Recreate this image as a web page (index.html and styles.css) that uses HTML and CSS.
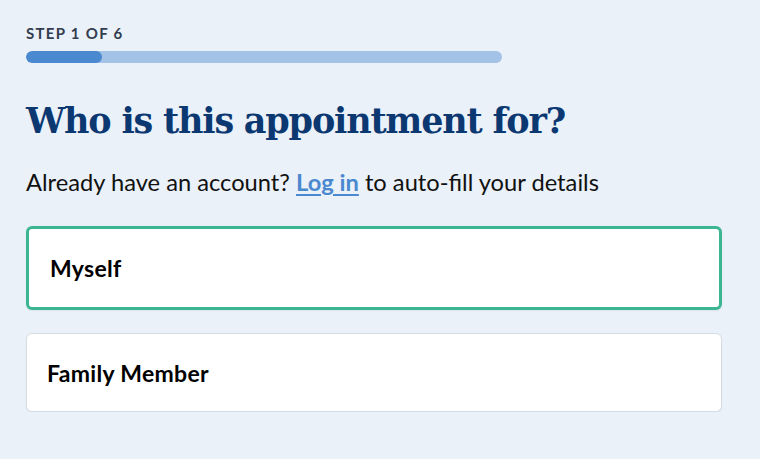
FILE: index.html
```html
<!DOCTYPE html>
<html lang="en">
<head>
<meta charset="utf-8">
<title>Who is this appointment for?</title>
<link rel="stylesheet" href="styles.css">
</head>
<body>
<main class="page">
  <div class="step">STEP 1 OF 6</div>
  <div class="progress"><div class="progress-fill" style="width:16%"></div></div>
  <h1 class="title">Who is this appointment for?</h1>
  <p class="lead">Already have an account? <a class="link" href="#">Log in</a> to auto-fill your details</p>
  <div class="options">
    <button class="option option-selected" type="button">Myself</button>
    <button class="option" type="button">Family Member</button>
  </div>
</main>
</body>
</html>
```

FILE: styles.css
```css
* { box-sizing: border-box; }
html, body { margin: 0; padding: 0; }
body {
  background: #eaf1f9;
  font-family: Lato, "Noto Sans", sans-serif;
  color: #111;
}
.page {
  padding: 24px 38px 0 26px;
  display: flex;
  flex-direction: column;
}
.step {
  font-size: 15px;
  font-weight: 700;
  letter-spacing: 1.3px;
  color: #333d4f;
  line-height: 18px;
}
.progress {
  margin-top: 9px;
  width: 476px;
  height: 12px;
  border-radius: 6px;
  background: #a4c2e6;
  overflow: hidden;
}
.progress-fill {
  height: 100%;
  border-radius: 6px;
  background: #4a88cf;
}
.title {
  margin: 36px 0 0;
  font-family: "DejaVu Serif", "Liberation Serif", serif;
  font-weight: 700;
  font-size: 35px;
  line-height: 44px;
  letter-spacing: -1.2px;
  color: #0c3872;
}
.lead {
  margin: 25px 0 0;
  font-size: 23.7px;
  line-height: 28px;
  color: #111;
}
.link {
  color: #4a88cf;
  font-weight: 700;
  text-decoration: underline;
  text-underline-offset: 3px;
  text-decoration-thickness: 2px;
}
.options {
  margin-top: 30px;
  display: flex;
  flex-direction: column;
  gap: 23px;
}
.option {
  display: block;
  width: 100%;
  text-align: left;
  background: #fff;
  border: 1px solid #d6dce4;
  border-radius: 6px;
  font-family: inherit;
  font-size: 23px;
  font-weight: 700;
  letter-spacing: 0.3px;
  color: #000;
  height: 79px;
  padding: 0 20px;
  box-shadow: 0 1px 2px rgba(0,0,0,0.06);
}
.option-selected {
  height: 84px;
  border: 3px solid #3bb592;
  padding: 0 21px;
}
```
